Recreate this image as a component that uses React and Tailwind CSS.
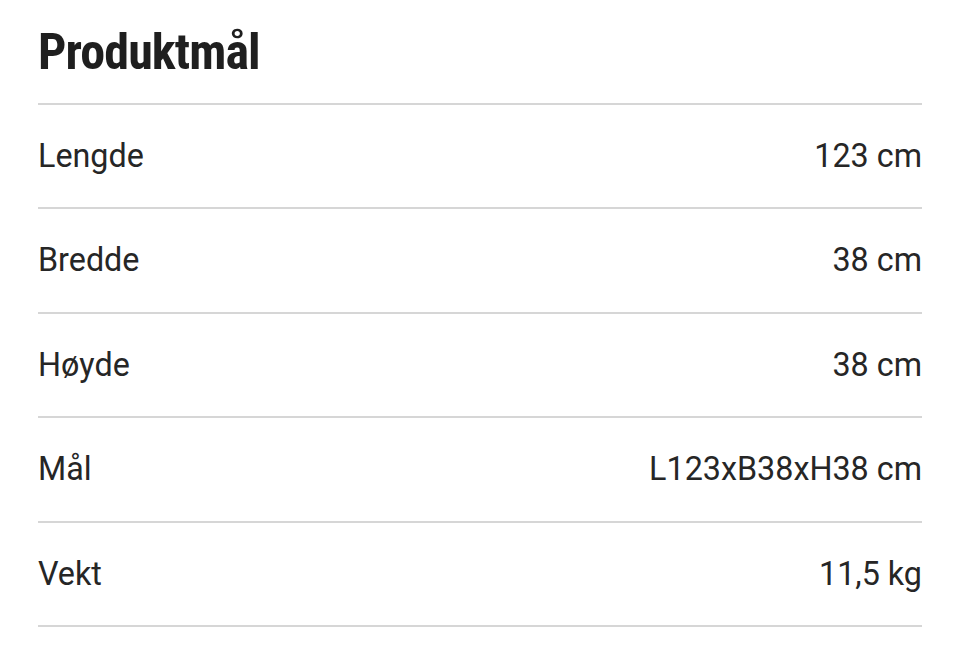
import React from 'react';

const rows = [
  { label: 'Lengde', value: '123 cm' },
  { label: 'Bredde', value: '38 cm' },
  { label: 'Høyde', value: '38 cm' },
  { label: 'Mål', value: 'L123xB38xH38 cm' },
  { label: 'Vekt', value: '11,5 kg' },
];

const App = () => {
  return (
    <div className="min-h-[646px] bg-white px-[38px] text-[#262626]" style={{ fontFamily: 'Roboto, "Noto Sans", sans-serif' }}>
      <div className="flex h-[103px] items-start pt-[22px]">
        <h1
          className="text-[50px] font-bold leading-[60px] tracking-[-0.9px] text-[#1f1f1f]"
          style={{ fontFamily: '"Liberation Sans Narrow", "Roboto Condensed", Roboto, sans-serif' }}
        >
          Produktmål
        </h1>
      </div>
      <div className="border-t-2 border-[#d6d6d6]">
        {rows.map((row) => (
          <div key={row.label} className="flex h-[104.4px] items-center justify-between border-b-2 border-[#d6d6d6] text-[32.3px]">
            <span>{row.label}</span>
            <span>{row.value}</span>
          </div>
        ))}
      </div>
    </div>
  );
};

export default App;
